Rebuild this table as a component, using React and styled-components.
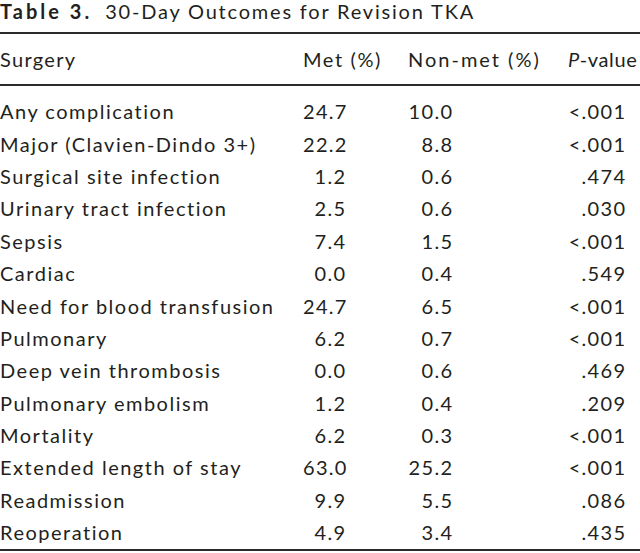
import styled, { createGlobalStyle } from "styled-components";

const GlobalStyle = createGlobalStyle`
  html, body {
    margin: 0;
    padding: 0;
    background: #fff;
  }
  body {
    font-family: "Lato", "Open Sans", sans-serif;
    color: #231f20;
  }
`;

const TableWrap = styled.div`
  width: 640px;
  display: flex;
  flex-direction: column;
`;

const Caption = styled.div`
  height: 32px;
  display: flex;
  align-items: flex-start;
  gap: 13px;
  font-size: 20px;
  line-height: 22px;
  letter-spacing: 1.8px;
  b {
    font-weight: 700;
    letter-spacing: 3px;
  }
`;

const Rule = styled.div`
  height: 2px;
  background: #2b2b2b;
`;

const Row = styled.div`
  display: grid;
  grid-template-columns: 303px 105px 160px 1fr;
  align-items: center;
  height: ${(p) => p.$h || "32.4px"};
  font-size: 20px;
  letter-spacing: 1.3px;
`;

const Cell = styled.div`
  text-align: ${(p) => (p.$right ? "right" : "left")};
  padding-right: ${(p) => p.$pr || 0}px;
  letter-spacing: ${(p) => (p.$ls != null ? `${p.$ls}px` : "inherit")};
  white-space: nowrap;
`;

const Body = styled.div`
  padding-top: 9px;
  padding-bottom: 1px;
`;

const rows = [
  ["Any complication", "24.7", "10.0", "<.001"],
  ["Major (Clavien-Dindo 3+)", "22.2", "8.8", "<.001"],
  ["Surgical site infection", "1.2", "0.6", ".474"],
  ["Urinary tract infection", "2.5", "0.6", ".030"],
  ["Sepsis", "7.4", "1.5", "<.001"],
  ["Cardiac", "0.0", "0.4", ".549"],
  ["Need for blood transfusion", "24.7", "6.5", "<.001"],
  ["Pulmonary", "6.2", "0.7", "<.001"],
  ["Deep vein thrombosis", "0.0", "0.6", ".469"],
  ["Pulmonary embolism", "1.2", "0.4", ".209"],
  ["Mortality", "6.2", "0.3", "<.001"],
  ["Extended length of stay", "63.0", "25.2", "<.001"],
  ["Readmission", "9.9", "5.5", ".086"],
  ["Reoperation", "4.9", "3.4", ".435"],
];

export default function App() {
  return (
    <>
      <GlobalStyle />
      <TableWrap>
        <Caption>
          <b>Table 3.</b>
          <span>30-Day Outcomes for Revision TKA</span>
        </Caption>
        <Rule />
        <Row $h="50px">
          <Cell>Surgery</Cell>
          <Cell $ls={1.6}>Met (%)</Cell>
          <Cell $ls={2}>Non-met (%)</Cell>
          <Cell $ls={0.6}>
            <i>P</i>-value
          </Cell>
        </Row>
        <Rule />
        <Body>
          {rows.map((r) => (
            <Row key={r[0]}>
              <Cell $ls={1.5}>{r[0]}</Cell>
              <Cell $right $pr={61.7}>{r[1]}</Cell>
              <Cell $right $pr={114.7}>{r[2]}</Cell>
              <Cell $right $pr={13.7}>{r[3]}</Cell>
            </Row>
          ))}
        </Body>
        <Rule />
      </TableWrap>
    </>
  );
}
